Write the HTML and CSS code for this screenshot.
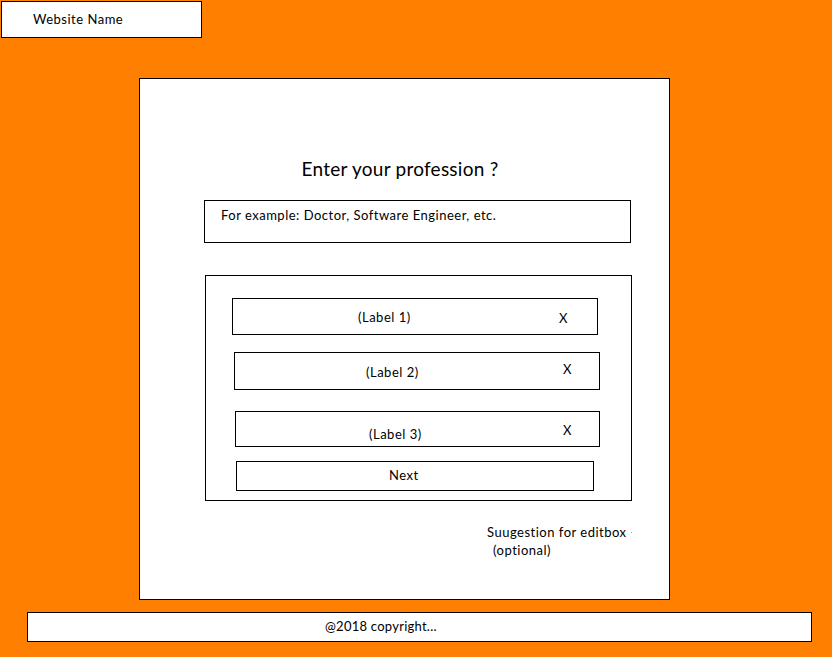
FILE: index.html
```html
<!DOCTYPE html>
<html lang="en">
<head>
<meta charset="utf-8">
<title>Enter your profession</title>
<link rel="stylesheet" href="styles.css">
</head>
<body>
<header class="site-header">Website Name</header>
<main class="card">
  <h1 class="title">Enter your profession ?</h1>
  <div class="edit-box">For example: Doctor, Software Engineer, etc.</div>
  <section class="suggestions">
    <div class="row row--1"><span class="label">(Label 1)</span><span class="remove">X</span></div>
    <div class="row row--2"><span class="label">(Label 2)</span><span class="remove">X</span></div>
    <div class="row row--3"><span class="label">(Label 3)</span><span class="remove">X</span></div>
    <div class="next">Next</div>
  </section>
  <div class="note">
    <div class="note-line">Suugestion for editbox<span class="dot"></span></div>
    <div class="note-line note-line--indent">(optional)</div>
  </div>
</main>
<footer class="site-footer">@2018 copyright...</footer>
</body>
</html>
```
FILE: styles.css
```css
html, body {
  margin: 0;
  padding: 0;
}
body {
  background: #ff8000;
  width: 832px;
  height: 657px;
  overflow: hidden;
  font-family: Lato, "Liberation Sans", sans-serif;
  font-size: 13px;
  letter-spacing: 0.5px;
  line-height: 16px;
  color: #000;
  display: flex;
  flex-direction: column;
  align-items: flex-start;
}
.site-header {
  box-sizing: border-box;
  margin: 1px 0 0 1px;
  width: 201px;
  height: 37px;
  background: #fff;
  border: 1px solid #000;
  padding: 9px 0 0 31px;
}
.card {
  box-sizing: border-box;
  margin: 40px 0 0 139px;
  width: 531px;
  height: 522px;
  background: #fff;
  border: 1px solid #000;
  display: flex;
  flex-direction: column;
  align-items: flex-start;
}
.title {
  margin: 78px 0 0 0;
  width: 100%;
  box-sizing: border-box;
  padding-right: 9px;
  text-align: center;
  font-weight: normal;
  font-size: 19px;
  letter-spacing: 0.25px;
  line-height: 24px;
}
.edit-box {
  box-sizing: border-box;
  margin: 19px 0 0 64px;
  width: 427px;
  height: 43px;
  border: 1px solid #000;
  padding: 6px 0 0 16px;
}
.suggestions {
  box-sizing: border-box;
  margin: 32px 0 0 65px;
  width: 427px;
  height: 226px;
  border: 1px solid #000;
  display: flex;
  flex-direction: column;
  align-items: flex-start;
}
.row {
  box-sizing: border-box;
  border: 1px solid #000;
  display: flex;
  align-items: flex-start;
}
.remove {
  margin-left: auto;
}
.row--1 {
  margin: 22px 0 0 26px;
  width: 366px;
  height: 37px;
}
.row--1 .label { padding: 10px 0 0 125px; }
.row--1 .remove { margin-top: 11px; margin-right: 29px; }
.row--2 {
  margin: 17px 0 0 28px;
  width: 366px;
  height: 38px;
}
.row--2 .label { padding: 11px 0 0 131px; }
.row--2 .remove { margin-top: 8px; margin-right: 27px; }
.row--3 {
  margin: 21px 0 0 29px;
  width: 365px;
  height: 36px;
}
.row--3 .label { padding: 14px 0 0 133px; }
.row--3 .remove { margin-top: 10px; margin-right: 27px; }
.next {
  box-sizing: border-box;
  margin: 14px 0 0 30px;
  width: 358px;
  height: 30px;
  border: 1px solid #000;
  padding: 5px 0 0 152px;
}
.note {
  margin: 23px 0 0 347px;
  line-height: 17px;
}
.note-line--indent {
  padding-left: 6px;
  padding-top: 1px;
}
.dot {
  display: inline-block;
  width: 1px;
  height: 1px;
  background: #999;
  margin-left: 4px;
  vertical-align: 4px;
}
.site-footer {
  box-sizing: border-box;
  margin: 12px 0 0 27px;
  width: 785px;
  height: 30px;
  background: #fff;
  border: 1px solid #000;
  padding: 5px 0 0 297px;
  letter-spacing: 0.25px;
}
```
